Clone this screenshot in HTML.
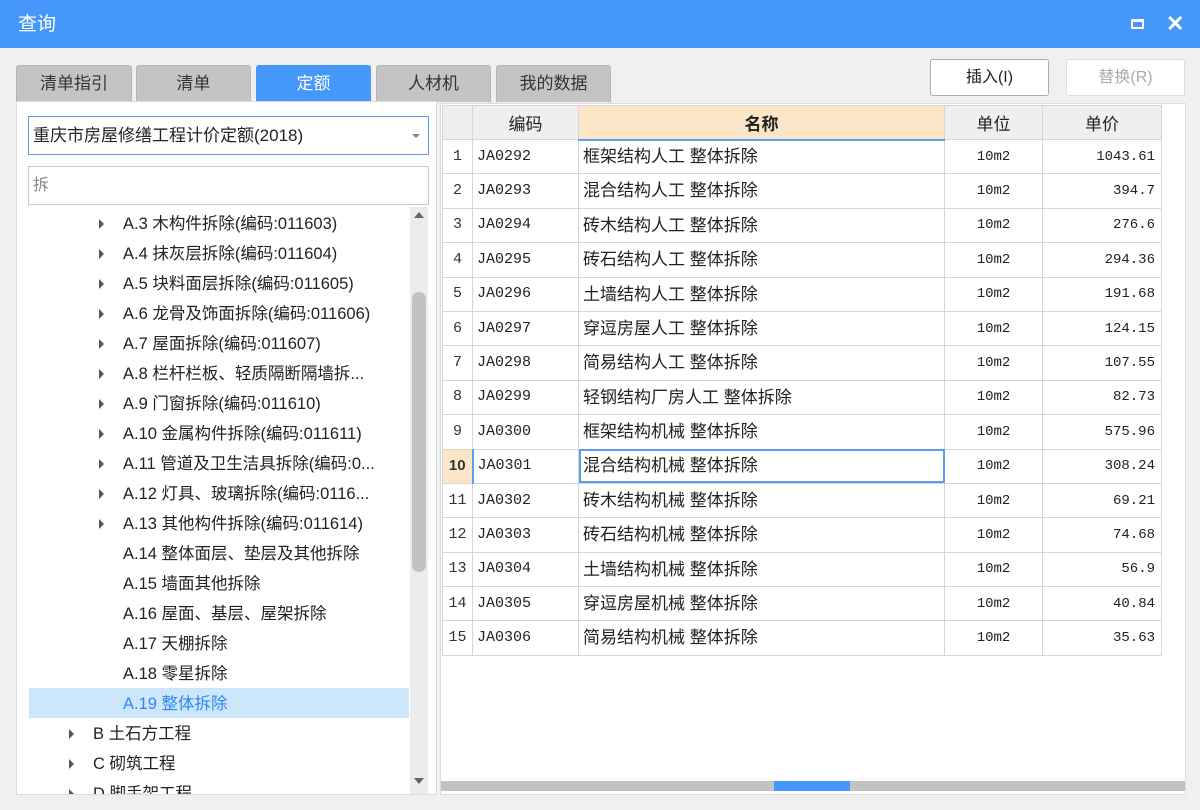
<!DOCTYPE html>
<html><head><meta charset="utf-8"><style>
*{box-sizing:border-box;margin:0;padding:0}
body{width:1200px;height:810px;overflow:hidden;background:#f0f0f0;font-family:"Liberation Sans","Noto Sans CJK SC",sans-serif;position:relative;font-size:16px;color:#222}
.abs{position:absolute}
.title{left:0;top:0;width:1200px;height:48px;background:#4597fa;color:#fff;font-size:19px;line-height:50px;padding-left:18px}
.tab{top:65px;height:37px;background:#c4c4c4;border:1px solid #b5b5b5;border-bottom:none;border-radius:3px 3px 0 0;text-align:center;line-height:36px;font-size:17px;color:#333}
.tab.on{background:#4597fa;color:#fff;border-color:#4597fa}
.btn{top:59px;height:37px;background:#fff;border:1px solid #adadad;border-radius:3px;text-align:center;line-height:35px;font-size:16px}
.left{left:16px;top:101px;width:421px;height:694px;background:#fff;border:1px solid #dcdcdc}
.tr{position:absolute;left:12px;width:380px;height:30px;line-height:30px;font-size:16.5px;color:#222;white-space:nowrap}
.arr{position:absolute;width:0;height:0;border-top:5px solid transparent;border-bottom:5px solid transparent;border-left:5px solid #555;top:10px}
table{border-collapse:collapse;font-size:15px}
td{border:1px solid #d6d6d6;height:34.4px;padding:0 4px;white-space:nowrap;vertical-align:middle;line-height:20px}
td span{display:inline-block;vertical-align:middle;line-height:20px}
.rn{width:30px;text-align:center;font-family:"Liberation Mono",monospace;color:#333;background:#fff}
.cd{width:106px;font-family:"Liberation Mono",monospace;font-size:15px}
.nm{width:366px;font-size:17px}
.un{width:98px;text-align:center;font-family:"Liberation Mono",monospace;font-size:14px}
.pr{width:119px;text-align:right;font-family:"Liberation Mono",monospace;font-size:14px;padding-right:6px}
th{background:#efefef;border:1px solid #d6d6d6;height:34px;font-weight:normal;font-size:17px}
</style></head><body>
<div class="abs title">查询</div>
<div class="abs" style="left:1131px;top:19px;width:13px;height:10px;border:2px solid #fff;border-top-width:3px"></div>
<div class="abs" style="left:1166px;top:11px;color:#fff;font-size:22px;font-weight:bold;line-height:26px">✕</div>
<div class="abs tab" style="left:16px;width:116px">清单指引</div>
<div class="abs tab" style="left:136px;width:115px">清单</div>
<div class="abs tab on" style="left:256px;width:115px">定额</div>
<div class="abs tab" style="left:376px;width:115px">人材机</div>
<div class="abs tab" style="left:496px;width:115px">我的数据</div>
<div class="abs btn" style="left:930px;width:119px">插入(I)</div>
<div class="abs btn" style="left:1066px;width:119px;color:#aaa;border-color:#ddd">替换(R)</div>
<div class="abs left">
 <div class="abs" style="left:11px;top:14px;width:401px;height:39px;border:1px solid #5aa0f0;line-height:37px;padding-left:4px;font-size:17px">重庆市房屋修缮工程计价定额(2018)<span style="position:absolute;right:8px;top:17px;border-left:4px solid transparent;border-right:4px solid transparent;border-top:4px solid #888"></span></div>
 <div class="abs" style="left:11px;top:64px;width:401px;height:39px;border:1px solid #c8c8c8;line-height:37px;padding-left:4px;font-size:16px;color:#888">拆</div>
 <div class="abs" style="left:393px;top:105px;width:18px;height:587px;background:#ececec"></div>
 <div class="abs" style="left:395px;top:190px;width:14px;height:280px;background:#c2c2c2;border-radius:7px"></div>
 <div class="abs" style="left:397px;top:110px;border-left:5px solid transparent;border-right:5px solid transparent;border-bottom:6px solid #666"></div>
 <div class="abs" style="left:397px;top:676px;border-left:5px solid transparent;border-right:5px solid transparent;border-top:6px solid #666"></div>
 <div class="abs" style="left:12px;top:586px;width:380px;height:30px;background:#cce6fc"></div>
 <div class="abs" style="left:0;top:0;width:392px;height:692px;overflow:hidden">
 <div class="tr" style="top:107px"><i class="arr" style="left:70px"></i><span style="margin-left:94px">A.3 木构件拆除(编码:011603)</span></div>
 <div class="tr" style="top:137px"><i class="arr" style="left:70px"></i><span style="margin-left:94px">A.4 抹灰层拆除(编码:011604)</span></div>
 <div class="tr" style="top:167px"><i class="arr" style="left:70px"></i><span style="margin-left:94px">A.5 块料面层拆除(编码:011605)</span></div>
 <div class="tr" style="top:197px"><i class="arr" style="left:70px"></i><span style="margin-left:94px">A.6 龙骨及饰面拆除(编码:011606)</span></div>
 <div class="tr" style="top:227px"><i class="arr" style="left:70px"></i><span style="margin-left:94px">A.7 屋面拆除(编码:011607)</span></div>
 <div class="tr" style="top:257px"><i class="arr" style="left:70px"></i><span style="margin-left:94px">A.8 栏杆栏板、轻质隔断隔墙拆...</span></div>
 <div class="tr" style="top:287px"><i class="arr" style="left:70px"></i><span style="margin-left:94px">A.9 门窗拆除(编码:011610)</span></div>
 <div class="tr" style="top:317px"><i class="arr" style="left:70px"></i><span style="margin-left:94px">A.10 金属构件拆除(编码:011611)</span></div>
 <div class="tr" style="top:347px"><i class="arr" style="left:70px"></i><span style="margin-left:94px">A.11 管道及卫生洁具拆除(编码:0...</span></div>
 <div class="tr" style="top:377px"><i class="arr" style="left:70px"></i><span style="margin-left:94px">A.12 灯具、玻璃拆除(编码:0116...</span></div>
 <div class="tr" style="top:407px"><i class="arr" style="left:70px"></i><span style="margin-left:94px">A.13 其他构件拆除(编码:011614)</span></div>
 <div class="tr" style="top:437px"><span style="margin-left:94px">A.14 整体面层、垫层及其他拆除</span></div>
 <div class="tr" style="top:467px"><span style="margin-left:94px">A.15 墙面其他拆除</span></div>
 <div class="tr" style="top:497px"><span style="margin-left:94px">A.16 屋面、基层、屋架拆除</span></div>
 <div class="tr" style="top:527px"><span style="margin-left:94px">A.17 天棚拆除</span></div>
 <div class="tr" style="top:557px"><span style="margin-left:94px">A.18 零星拆除</span></div>
 <div class="tr" style="top:587px;color:#2f88ee"><span style="margin-left:94px">A.19 整体拆除</span></div>
 <div class="tr" style="top:617px"><i class="arr" style="left:40px"></i><span style="margin-left:64px">B 土石方工程</span></div>
 <div class="tr" style="top:647px"><i class="arr" style="left:40px"></i><span style="margin-left:64px">C 砌筑工程</span></div>
 <div class="tr" style="top:677px"><i class="arr" style="left:40px"></i><span style="margin-left:64px">D 脚手架工程</span></div>
 </div>
</div>
<div class="abs" style="left:440px;top:103px;width:746px;height:692px;background:#fff;border:1px solid #dcdcdc">
<table class="abs" style="left:1px;top:1px">
<tr><th style="width:30px"></th><th>编码</th><th style="background:#fde6c8;border-bottom:2px solid #5aa0f0;font-weight:bold">名称</th><th>单位</th><th>单价</th></tr>
<tr><td class="rn">1</td><td class="cd">JA0292</td><td class="nm"><span>框架结构人工 整体拆除</span></td><td class="un">10m2</td><td class="pr">1043.61</td></tr>
<tr><td class="rn">2</td><td class="cd">JA0293</td><td class="nm"><span>混合结构人工 整体拆除</span></td><td class="un">10m2</td><td class="pr">394.7</td></tr>
<tr><td class="rn">3</td><td class="cd">JA0294</td><td class="nm"><span>砖木结构人工 整体拆除</span></td><td class="un">10m2</td><td class="pr">276.6</td></tr>
<tr><td class="rn">4</td><td class="cd">JA0295</td><td class="nm"><span>砖石结构人工 整体拆除</span></td><td class="un">10m2</td><td class="pr">294.36</td></tr>
<tr><td class="rn">5</td><td class="cd">JA0296</td><td class="nm"><span>土墙结构人工 整体拆除</span></td><td class="un">10m2</td><td class="pr">191.68</td></tr>
<tr><td class="rn">6</td><td class="cd">JA0297</td><td class="nm"><span>穿逗房屋人工 整体拆除</span></td><td class="un">10m2</td><td class="pr">124.15</td></tr>
<tr><td class="rn">7</td><td class="cd">JA0298</td><td class="nm"><span>简易结构人工 整体拆除</span></td><td class="un">10m2</td><td class="pr">107.55</td></tr>
<tr><td class="rn">8</td><td class="cd">JA0299</td><td class="nm"><span>轻钢结构厂房人工 整体拆除</span></td><td class="un">10m2</td><td class="pr">82.73</td></tr>
<tr><td class="rn">9</td><td class="cd">JA0300</td><td class="nm"><span>框架结构机械 整体拆除</span></td><td class="un">10m2</td><td class="pr">575.96</td></tr>
<tr><td class="rn" style="background:#fde6c8;font-weight:bold;font-family:'Liberation Sans';border-right:2px solid #5aa0f0">10</td><td class="cd">JA0301</td><td class="nm" style="outline:2px solid #5aa0f0;outline-offset:-2px"><span>混合结构机械 整体拆除</span></td><td class="un">10m2</td><td class="pr">308.24</td></tr>
<tr><td class="rn">11</td><td class="cd">JA0302</td><td class="nm"><span>砖木结构机械 整体拆除</span></td><td class="un">10m2</td><td class="pr">69.21</td></tr>
<tr><td class="rn">12</td><td class="cd">JA0303</td><td class="nm"><span>砖石结构机械 整体拆除</span></td><td class="un">10m2</td><td class="pr">74.68</td></tr>
<tr><td class="rn">13</td><td class="cd">JA0304</td><td class="nm"><span>土墙结构机械 整体拆除</span></td><td class="un">10m2</td><td class="pr">56.9</td></tr>
<tr><td class="rn">14</td><td class="cd">JA0305</td><td class="nm"><span>穿逗房屋机械 整体拆除</span></td><td class="un">10m2</td><td class="pr">40.84</td></tr>
<tr><td class="rn">15</td><td class="cd">JA0306</td><td class="nm"><span>简易结构机械 整体拆除</span></td><td class="un">10m2</td><td class="pr">35.63</td></tr>
</table>
<div class="abs" style="left:0;top:677px;width:744px;height:10px;background:#c2c2c2"></div>
<div class="abs" style="left:333px;top:677px;width:76px;height:10px;background:#4597fa"></div>
</div>
</body></html>
